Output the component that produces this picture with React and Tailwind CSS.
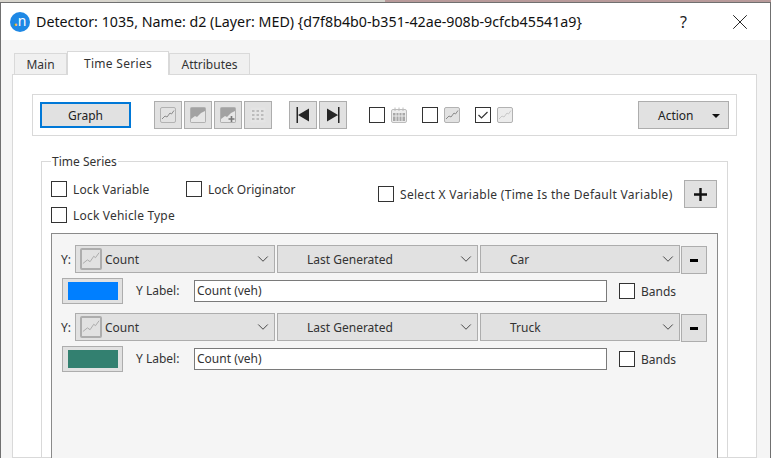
import { ChevronDown, X } from 'lucide-react'

const LineIcon = ({ faint = false }) => (
  <svg width="16" height="16" viewBox="0 0 16 16" className="block">
    <rect x="0.5" y="0.5" width="15" height="15" rx="1.5" fill={faint ? '#ececec' : '#e2e2e2'} stroke="#b2b2b2" />
    <path d="M2 12 L5 9 L7 10 L10 6 L11.5 7 L14 3.5" fill="none" stroke={faint ? '#c8c8c8' : '#8a8a8a'} strokeWidth="1" />
  </svg>
)

const AreaIcon = ({ plus = false }) => (
  <svg width="16" height="16" viewBox="0 0 16 16" className="block">
    <rect x="0.5" y="0.5" width="15" height="15" rx="1" fill="#a2a2a2" stroke="#b0b0b0" />
    <path d="M1 15 L1 12 L5 9 L7 10 L11 6 L15 4 L15 15 Z" fill="#e6e6e6" />
    {plus && <path d="M8.5 12 H14.5 M11.5 9 V15" stroke="#777777" strokeWidth="1.6" />}
  </svg>
)

const GridIcon = () => (
  <svg width="16" height="16" viewBox="0 0 16 16" className="block">
    <rect x="0.5" y="0.5" width="15" height="15" rx="1" fill="#e4e4e4" />
    {[3, 7, 11].map((y) =>
      [2, 6.5, 11].map((x) => <rect key={`${x}-${y}`} x={x} y={y} width="2.5" height="2" fill="#bcbcbc" />)
    )}
  </svg>
)

const CalendarIcon = () => (
  <svg width="16" height="16" viewBox="0 0 16 16" className="block">
    <rect x="0.5" y="2.5" width="15" height="13" rx="1.5" fill="#ececec" stroke="#bcbcbc" />
    <path d="M4 0.5 V4 M8 0.5 V4 M12 0.5 V4" stroke="#bcbcbc" />
    <rect x="2" y="6" width="12" height="8" fill="#a8a8a8" />
    <path d="M5 6 V14 M8 6 V14 M11 6 V14 M2 9 H14" stroke="#ececec" />
  </svg>
)

const NavIcon = ({ dir }) => (
  <svg width="14" height="16" viewBox="0 0 14 16" className="block">
    {dir === 'first' ? (
      <path d="M0.5 0 H2 V16 H0.5 Z M13 1.5 V14.5 L2 8 Z" fill="#262626" />
    ) : (
      <path d="M12 0 H13.5 V16 H12 Z M1 1.5 V14.5 L12 8 Z" fill="#262626" />
    )}
  </svg>
)

const ToolButton = ({ children }) => (
  <div className="w-[28px] h-[28px] flex items-center justify-center bg-[#e1e1e1] border border-[#adadad]">{children}</div>
)

const Check = ({ checked = false }) => (
  <div className="w-[16px] h-[16px] shrink-0 bg-white border border-[#333333] flex items-center justify-center">
    {checked && (
      <svg width="12" height="10" viewBox="0 0 12 10">
        <path d="M1.5 5 L4.5 8 L10.5 2" fill="none" stroke="#333333" strokeWidth="1.2" />
      </svg>
    )}
  </div>
)

const CheckLabel = ({ label, className = '' }) => (
  <div className={`flex items-center gap-[6px] ${className}`}>
    <Check />
    <span className="translate-y-px text-[12px] leading-[16px] text-[#333333] whitespace-nowrap">{label}</span>
  </div>
)

const Select = ({ width, indent, icon = false, label }) => (
  <div style={{ width }} className="h-[28px] shrink-0 bg-[#e1e1e1] border border-[#adadad] flex items-center pr-[2px]">
    {icon && (
      <div className="ml-[4px] mr-[3px] w-[22px] h-[22px] border-2 border-[#adadad] rounded-[2px] flex items-center justify-center">
        <svg width="20" height="20" viewBox="0 0 20 20">
          <path d="M1 15 L6 11 L9 13 L13 7 L15 8.5 L19 3" fill="none" stroke="#a6a6a6" strokeWidth="1" />
        </svg>
      </div>
    )}
    <span style={{ marginLeft: indent }} className="flex-1 translate-y-px text-[12px] text-[#333333] whitespace-nowrap">{label}</span>
    <ChevronDown size={18} strokeWidth={1.3} color="#444444" />
  </div>
)

const SeriesRow = ({ vehicle, color }) => (
  <div className="flex flex-col">
    <div className="flex items-center">
      <span className="w-[14px] ml-[9px] translate-y-px text-[12px] text-[#333333]">Y:</span>
      <Select width={200} icon label="Count" />
      <div className="w-[2px]" />
      <Select width={201} indent={29} label="Last Generated" />
      <div className="w-[2px]" />
      <Select width={200} indent={29} label={vehicle} />
      <div className="ml-px mt-px -mb-px w-[26px] h-[28px] bg-[#e1e1e1] border border-[#adadad] flex items-center justify-center">
        <div className="w-[8px] h-[3px] bg-black mt-px" />
      </div>
    </div>
    <div className="flex items-center mt-[5px] h-[26px]">
      <div className="ml-[10px] w-[61px] h-[26px] bg-[#e1e1e1] border border-[#adadad] flex items-center justify-center">
        <div style={{ backgroundColor: color }} className="w-[50px] h-[18px]" />
      </div>
      <span className="ml-[13px] w-[58px] text-[12px] text-[#333333] whitespace-nowrap">Y Label:</span>
      <div className="w-[413px] h-[22px] bg-white border border-[#7a7a7a] flex items-center pl-[2px] text-[12px] text-[#333333]">Count (veh)</div>
      <CheckLabel label="Bands" className="ml-[12px]" />
    </div>
  </div>
)

export default function App() {
  return (
    <div className="w-[771px] h-[458px] overflow-hidden flex flex-col bg-[#f5f5f5] font-['Noto_Sans','Open_Sans',sans-serif]">
      <div className="h-[2px] shrink-0 flex">
        <div className="w-[117px] bg-[#d8d5cd]" />
        <div className="w-[268px] bg-[#d3d3cc]" />
        <div className="flex-1 bg-[#b89a9a]" />
      </div>

      <div className="flex-1 min-h-0 flex flex-col border-x border-t border-[#707070]">
        <div className="h-[37px] shrink-0 bg-white flex items-center pl-[9px]">
          <div className="w-[20px] h-[20px] rounded-full bg-[#1e88e5] flex items-center justify-center text-white text-[14px] leading-none pb-[2px]">
            <span className="text-[#f5b942] font-bold">.</span>n
          </div>
          <span className="ml-[6px] text-[14.25px] text-[#111111] whitespace-nowrap">
            Detector: 1035, Name: d2 (Layer: MED) {'{d7f8b4b0-b351-42ae-908b-9cfcb45541a9}'}
          </span>
          <span className="ml-auto text-[16px] text-[#222222]">?</span>
          <X size={26} strokeWidth={0.9} color="#222222" className="ml-[40px] mr-[17px]" />
        </div>

        <div className="flex-1 min-h-0 flex flex-col pl-[11px] pr-[13px]">
          <div className="h-[34px] shrink-0 flex items-end pl-[2px] relative z-10">
            <div className="w-[53px] h-[21px] bg-[#f0f0f0] border border-b-0 border-[#d9d9d9] flex items-center justify-center pt-[2px] text-[12px] text-[#333333]">Main</div>
            <div className="w-[102px] h-[24px] -mb-px bg-white border border-b-0 border-[#d9d9d9] flex items-center justify-center text-[12px] tracking-[0.3px] text-[#333333]">Time Series</div>
            <div className="w-[81px] h-[21px] bg-[#f0f0f0] border border-b-0 border-[#d9d9d9] flex items-center justify-center pt-[2px] text-[12px] text-[#333333]">Attributes</div>
          </div>

          <div className="flex-1 min-h-0 bg-white border border-[#d9d9d9] pt-[19px] pl-[19px] pr-[19px]">
            <div className="h-[42px] border border-[#d9d9d9] flex items-center pl-[7px] pr-[7px]">
              <div className="w-[91px] h-[26px] bg-[#e1e1e1] border-2 border-[#0078d7] flex items-center justify-center pt-[2px] text-[12px] text-[#222222]">Graph</div>
              <div className="flex gap-[2px] ml-[23px]">
                <ToolButton><LineIcon /></ToolButton>
                <ToolButton><AreaIcon /></ToolButton>
                <ToolButton><AreaIcon plus /></ToolButton>
                <ToolButton><GridIcon /></ToolButton>
              </div>
              <div className="flex gap-[2px] ml-[17px]">
                <ToolButton><NavIcon dir="first" /></ToolButton>
                <ToolButton><NavIcon dir="last" /></ToolButton>
              </div>
              <div className="flex items-center gap-[6px] ml-[22px]"><Check /><CalendarIcon /></div>
              <div className="flex items-center gap-[6px] ml-[15px]"><Check /><LineIcon /></div>
              <div className="flex items-center gap-[6px] ml-[15px]"><Check checked /><LineIcon faint /></div>
              <div className="ml-auto w-[91px] h-[28px] bg-[#e1e1e1] border border-[#adadad] flex items-center pl-[19px] pt-[2px] text-[12px] text-[#222222]">
                Action
                <div className="ml-auto mr-[8px] w-0 h-0 border-x-[4px] border-x-transparent border-t-[4px] border-t-[#111111]" />
              </div>
            </div>

            <div className="mt-[25px] ml-[9px] mr-[9px] border border-[#d9d9d9] h-[400px] relative px-[9px]">
              <span className="absolute -top-[8px] left-[9px] bg-white px-px text-[12px] leading-[16px] text-[#333333]">Time Series</span>
              <div className="flex pt-[19px]">
                <div className="w-[327px] flex flex-col gap-[10px]">
                  <div className="flex">
                    <CheckLabel label="Lock Variable" className="w-[135px] tracking-[0.15px]" />
                    <CheckLabel label="Lock Originator" />
                  </div>
                  <CheckLabel label="Lock Vehicle Type" className="tracking-[0.2px]" />
                </div>
                <CheckLabel label="Select X Variable (Time Is the Default Variable)" className="h-[16px] mt-[5px] tracking-[0.3px]" />
                <div className="ml-auto mr-[1px] -mt-px w-[33px] h-[28px] bg-[#e1e1e1] border border-[#adadad] flex items-center justify-center">
                  <svg width="13" height="13" viewBox="0 0 13 13"><path d="M6.5 0 V13 M0 6.5 H13" stroke="#111111" strokeWidth="2.4" /></svg>
                </div>
              </div>
              <div className="mt-[10px] w-[667px] h-[300px] border border-[#8a8a8a] bg-[#f5f5f5] pt-[11px] flex flex-col gap-[9px]">
                <SeriesRow vehicle="Car" color="#007fff" />
                <SeriesRow vehicle="Truck" color="#338070" />
              </div>
            </div>
          </div>
        </div>
      </div>
    </div>
  )
}
